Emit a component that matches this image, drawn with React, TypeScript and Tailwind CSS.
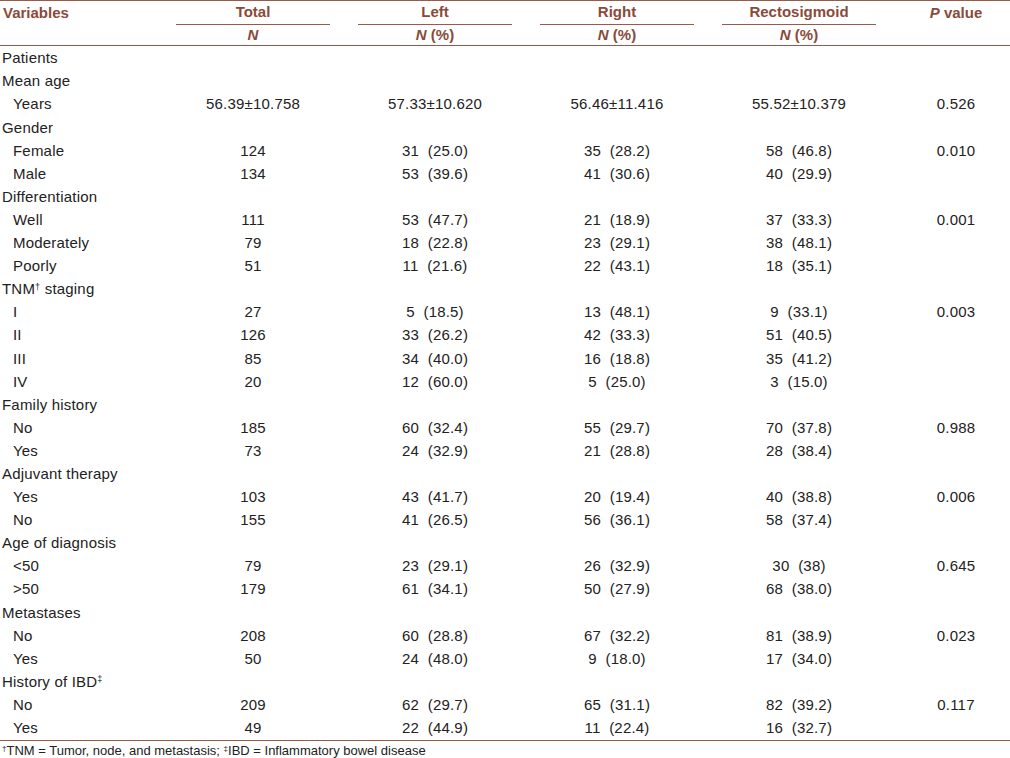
import React from 'react';

type Row = { label: React.ReactNode; sub?: boolean; cells?: string[]; p?: string };

const ROWS: Row[] = [
    { label: 'Patients' },
    { label: 'Mean age' },
    { label: 'Years', sub: true, cells: ['56.39±10.758', '57.33±10.620', '56.46±11.416', '55.52±10.379'], p: '0.526' },
    { label: 'Gender' },
    { label: 'Female', sub: true, cells: ['124', '31  (25.0)', '35  (28.2)', '58  (46.8)'], p: '0.010' },
    { label: 'Male', sub: true, cells: ['134', '53  (39.6)', '41  (30.6)', '40  (29.9)'] },
    { label: 'Differentiation' },
    { label: 'Well', sub: true, cells: ['111', '53  (47.7)', '21  (18.9)', '37  (33.3)'], p: '0.001' },
    { label: 'Moderately', sub: true, cells: ['79', '18  (22.8)', '23  (29.1)', '38  (48.1)'] },
    { label: 'Poorly', sub: true, cells: ['51', '11  (21.6)', '22  (43.1)', '18  (35.1)'] },
    { label: <>TNM<sup className="text-[9px]">†</sup> staging</> },
    { label: 'I', sub: true, cells: ['27', '5  (18.5)', '13  (48.1)', '9  (33.1)'], p: '0.003' },
    { label: 'II', sub: true, cells: ['126', '33  (26.2)', '42  (33.3)', '51  (40.5)'] },
    { label: 'III', sub: true, cells: ['85', '34  (40.0)', '16  (18.8)', '35  (41.2)'] },
    { label: 'IV', sub: true, cells: ['20', '12  (60.0)', '5  (25.0)', '3  (15.0)'] },
    { label: 'Family history' },
    { label: 'No', sub: true, cells: ['185', '60  (32.4)', '55  (29.7)', '70  (37.8)'], p: '0.988' },
    { label: 'Yes', sub: true, cells: ['73', '24  (32.9)', '21  (28.8)', '28  (38.4)'] },
    { label: 'Adjuvant therapy' },
    { label: 'Yes', sub: true, cells: ['103', '43  (41.7)', '20  (19.4)', '40  (38.8)'], p: '0.006' },
    { label: 'No', sub: true, cells: ['155', '41  (26.5)', '56  (36.1)', '58  (37.4)'] },
    { label: 'Age of diagnosis' },
    { label: '<50', sub: true, cells: ['79', '23  (29.1)', '26  (32.9)', '30  (38)'], p: '0.645' },
    { label: '>50', sub: true, cells: ['179', '61  (34.1)', '50  (27.9)', '68  (38.0)'] },
    { label: 'Metastases' },
    { label: 'No', sub: true, cells: ['208', '60  (28.8)', '67  (32.2)', '81  (38.9)'], p: '0.023' },
    { label: 'Yes', sub: true, cells: ['50', '24  (48.0)', '9  (18.0)', '17  (34.0)'] },
    { label: <>History of IBD<sup className="text-[9px]">‡</sup></> },
    { label: 'No', sub: true, cells: ['209', '62  (29.7)', '65  (31.1)', '82  (39.2)'], p: '0.117' },
    { label: 'Yes', sub: true, cells: ['49', '22  (44.9)', '11  (22.4)', '16  (32.7)'] },
];

const GRID = 'grid grid-cols-[162px_182px_182px_182px_182px_120px]';

const App: React.FC = () => {
    return (
        <div className="w-[1010px] h-[758px] bg-white overflow-hidden font-['Liberation_Sans',Arial,sans-serif]">
            {/* Header */}
            <div className="border-t border-[#9a5a48] border-b text-[#8a4a3a] font-bold text-[15px]">
                <div className={`${GRID} h-[22px] items-center`}>
                    <div className="pl-[3px]">Variables</div>
                    {['Total', 'Left', 'Right', 'Rectosigmoid'].map(h => (
                        <div key={h} className="h-full px-[14px]">
                            <div className="h-full flex items-center justify-center border-b border-[#9a5a48]">{h}</div>
                        </div>
                    ))}
                    <div className="text-center pl-[12px]"><i>P</i> value</div>
                </div>
                <div className={`${GRID} h-[22px] items-center pt-[1px]`}>
                    <div />
                    <div className="text-center"><i>N</i></div>
                    <div className="text-center"><i>N</i> (%)</div>
                    <div className="text-center"><i>N</i> (%)</div>
                    <div className="text-center"><i>N</i> (%)</div>
                    <div />
                </div>
            </div>

            {/* Body */}
            <div className="border-b border-[#9a5a48] text-[15px] tracking-[0.2px] text-[#222] pt-[1px]">
                {ROWS.map((r, i) => (
                    <div key={i} className={`${GRID} h-[23.1px] items-center whitespace-pre`}>
                        <div className={r.sub ? 'pl-[13px]' : 'pl-[2px]'}>{r.label}</div>
                        {(r.cells || ['', '', '', '']).map((c, j) => (
                            <div key={j} className="text-center">{c}</div>
                        ))}
                        <div className="text-center pl-[12px]">{r.p}</div>
                    </div>
                ))}
            </div>

            {/* Footnote */}
            <div className="text-[13px] leading-[14px] text-[#222] pl-[2px] pt-[3px]">
                <sup className="text-[8px]">†</sup>TNM = Tumor, node, and metastasis; <sup className="text-[8px]">‡</sup>IBD = Inflammatory bowel disease
            </div>
        </div>
    );
};

export default App;
